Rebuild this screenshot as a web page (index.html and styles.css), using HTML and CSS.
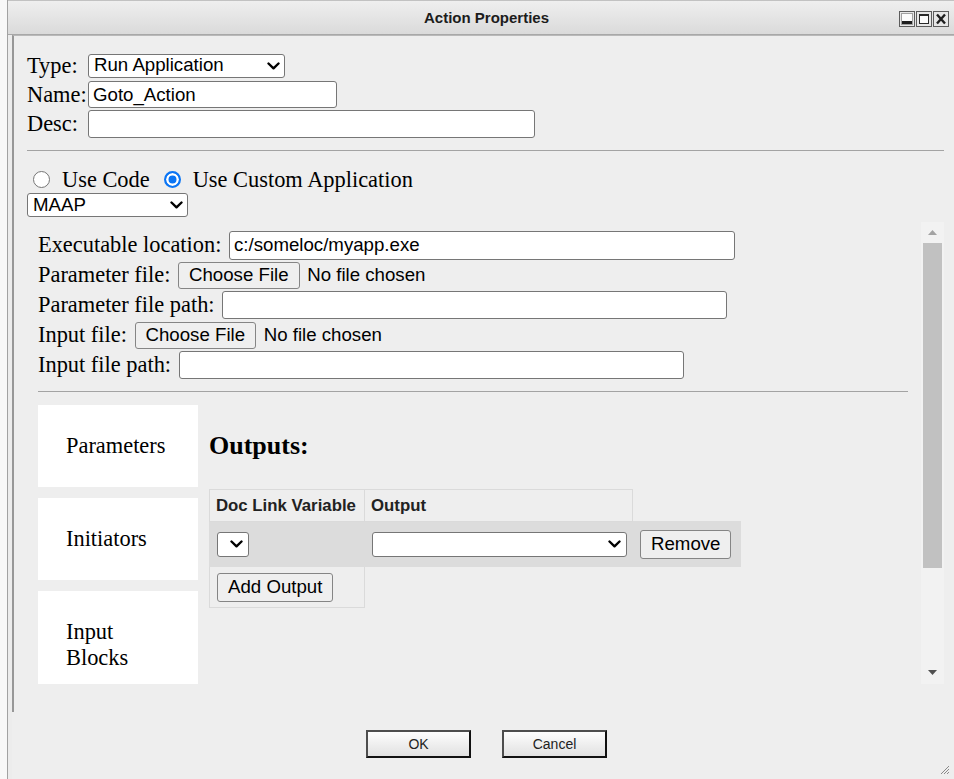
FILE: index.html
```html
<!DOCTYPE html>
<html lang="en">
<head>
<meta charset="utf-8">
<title>Action Properties</title>
<link rel="stylesheet" href="styles.css">
</head>
<body>
<div class="dialog">
  <header class="titlebar">
    <span class="title-spacer"></span>
    <h1 class="title">Action Properties</h1>
    <div class="win-buttons">
      <svg class="win-btn" width="16" height="16" viewBox="0 0 16 16" aria-label="Minimize">
        <rect x="0.5" y="0.5" width="15" height="15" fill="#e6e6e6" stroke="#5c5c5c"/>
        <rect x="2.5" y="2.5" width="11" height="11" fill="#fbfbfb" stroke="#a0a0a0"/>
        <rect x="3" y="10" width="10" height="3" fill="#1e1e1e"/>
      </svg>
      <svg class="win-btn" width="16" height="16" viewBox="0 0 16 16" aria-label="Maximize">
        <rect x="0.5" y="0.5" width="15" height="15" fill="#e6e6e6" stroke="#5c5c5c"/>
        <rect x="3.5" y="3.5" width="9" height="9" fill="#fbfbfb" stroke="#2a2a2a"/>
        <rect x="3" y="3" width="10" height="2" fill="#2a2a2a"/>
      </svg>
      <svg class="win-btn" width="16" height="16" viewBox="0 0 16 16" aria-label="Close">
        <rect x="0.5" y="0.5" width="15" height="15" fill="#e6e6e6" stroke="#5c5c5c"/>
        <path d="M4 3.5 L12 12.5 M12 3.5 L4 12.5" stroke="#1e1e1e" stroke-width="2.4" fill="none"/>
      </svg>
    </div>
  </header>

  <div class="dialog-body">
    <div class="panel">
      <div class="props">
        <span class="lbl">Type:</span>
        <span class="select select-type">
          <span class="select-value">Run Application</span>
          <svg class="chev" width="13" height="8" viewBox="0 0 13 8"><path d="M1.5 1.5 L6.5 6.3 L11.5 1.5"/></svg>
        </span>
        <span class="lbl">Name:</span>
        <input class="text name-input" type="text" value="Goto_Action">
        <span class="lbl">Desc:</span>
        <input class="text desc-input" type="text" value="">
      </div>

      <hr class="rule">

      <div class="mode">
        <label class="radio-opt first"><input type="radio" name="mode"> Use Code</label>
        <label class="radio-opt"><input type="radio" name="mode" checked> Use Custom Application</label>
      </div>

      <span class="select select-app">
        <span class="select-value">MAAP</span>
        <svg class="chev" width="13" height="8" viewBox="0 0 13 8"><path d="M1.5 1.5 L6.5 6.3 L11.5 1.5"/></svg>
      </span>

      <div class="scrollbox">
        <div class="scroll-content">
          <div class="field">
            <span class="lbl">Executable location:</span>
            <input class="text exe-input" type="text" value="c:/someloc/myapp.exe">
          </div>
          <div class="field">
            <span class="lbl">Parameter file:</span>
            <button class="btn" type="button">Choose File</button>
            <span class="file-name">No file chosen</span>
          </div>
          <div class="field">
            <span class="lbl">Parameter file path:</span>
            <input class="text path-input" type="text" value="">
          </div>
          <div class="field">
            <span class="lbl">Input file:</span>
            <button class="btn" type="button">Choose File</button>
            <span class="file-name">No file chosen</span>
          </div>
          <div class="field">
            <span class="lbl">Input file path:</span>
            <input class="text path-input" type="text" value="">
          </div>

          <hr class="rule rule-inner">

          <div class="editor">
            <nav class="tabs">
              <div class="tab">Parameters</div>
              <div class="tab">Initiators</div>
              <div class="tab">Input Blocks</div>
            </nav>
            <section class="pane">
              <h3 class="pane-title">Outputs:</h3>
              <table class="outputs">
                <colgroup>
                  <col class="col-var">
                  <col class="col-out">
                  <col class="col-act">
                </colgroup>
                <thead>
                  <tr>
                    <th>Doc Link Variable</th>
                    <th>Output</th>
                    <th class="blank"></th>
                  </tr>
                </thead>
                <tbody>
                  <tr class="out-row">
                    <td>
                      <span class="select select-var">
                        <svg class="chev" width="13" height="8" viewBox="0 0 13 8"><path d="M1.5 1.5 L6.5 6.3 L11.5 1.5"/></svg>
                      </span>
                    </td>
                    <td>
                      <span class="select select-out">
                        <span class="select-value"></span>
                        <svg class="chev" width="13" height="8" viewBox="0 0 13 8"><path d="M1.5 1.5 L6.5 6.3 L11.5 1.5"/></svg>
                      </span>
                    </td>
                    <td><button class="btn btn-row" type="button">Remove</button></td>
                  </tr>
                  <tr class="add-row">
                    <td><button class="btn btn-row" type="button">Add Output</button></td>
                  </tr>
                </tbody>
              </table>
            </section>
          </div>
        </div>

        <div class="scrollbar">
          <div class="sb-btn sb-up">
            <svg width="9" height="5" viewBox="0 0 9 5"><path d="M0 5 L4.5 0 L9 5 Z" fill="#a3a3a3"/></svg>
          </div>
          <div class="sb-thumb"></div>
          <div class="sb-track"></div>
          <div class="sb-btn sb-down">
            <svg width="9" height="5" viewBox="0 0 9 5"><path d="M0 0 L4.5 5 L9 0 Z" fill="#505050"/></svg>
          </div>
        </div>
      </div>
    </div>

    <footer class="actions">
      <button class="dlg-btn" type="button">OK</button>
      <button class="dlg-btn" type="button">Cancel</button>
      <svg class="grip" width="11" height="11" viewBox="0 0 11 11">
        <path d="M10 2 L2 10 M10 5 L5 10 M10 8 L8 10" stroke="#8a8a8a" stroke-width="1"/>
      </svg>
    </footer>
  </div>
</div>
</body>
</html>
```

FILE: styles.css
```css
* {
  box-sizing: border-box;
}

html,
body {
  margin: 0;
  height: 100%;
}

body {
  background: #f8f8f8;
  overflow: hidden;
  font-family: "Liberation Serif", "Times New Roman", serif;
  font-size: 22.4px;
  color: #000;
}

/* ---------- window frame ---------- */

.dialog {
  margin-left: 7px;
  width: 958px;
  height: 779px;
  border-left: 1px solid #a2a2a2;
  background: #ececec;
  display: flex;
  flex-direction: column;
}

.titlebar {
  flex: none;
  height: 35px;
  display: grid;
  grid-template-columns: 1fr auto 1fr;
  align-items: center;
  background: linear-gradient(#efefef, #dadada);
  border-top: 1px solid #c2c2c2;
  border-bottom: 1px solid #a8a8a8;
}

.title {
  margin: 0;
  font-family: "Liberation Sans", Arial, sans-serif;
  font-size: 15px;
  font-weight: bold;
  color: #1c1c1c;
}

.win-buttons {
  justify-self: end;
  display: flex;
  gap: 1px;
  padding-top: 2px;
  margin-right: 16px;
}

.win-btn {
  display: block;
}

.dialog-body {
  flex: 1;
  display: flex;
  flex-direction: column;
  padding: 0 4px;
}

.panel {
  border-left: 2px solid #979797;
  border-right: 2px solid #979797;
  border-top: 1px solid #b9b9b9;
  background: #eeeeee;
  padding: 15px 15px 28px 13px;
}

/* ---------- shared controls ---------- */

.lbl {
  white-space: nowrap;
}

.text {
  height: 28px;
  margin: 0;
  padding: 0 4px;
  border: 1px solid #767676;
  border-radius: 3px;
  background: #fff;
  color: #000;
  font-family: "Liberation Sans", Arial, sans-serif;
  font-size: 18.67px;
}

.select {
  display: flex;
  align-items: center;
  justify-content: space-between;
  height: 24px;
  padding: 0 4px 0 5px;
  border: 1px solid #767676;
  border-radius: 3px;
  background: #fff;
  font-family: "Liberation Sans", Arial, sans-serif;
  font-size: 18.67px;
  line-height: 1;
  white-space: nowrap;
}

.chev {
  flex: none;
  display: block;
}

.chev path {
  fill: none;
  stroke: #000;
  stroke-width: 2.4;
  stroke-linecap: round;
  stroke-linejoin: round;
}

.btn {
  height: 27px;
  margin: 0;
  padding: 0 10px;
  border: 1px solid #858585;
  border-radius: 3px;
  background: #efefef;
  color: #000;
  font-family: "Liberation Sans", Arial, sans-serif;
  font-size: 18.67px;
  white-space: nowrap;
}

.rule {
  height: 0;
  margin: 12px 0 0;
  border: 0;
  border-top: 1px solid #a3a3a3;
}

/* ---------- header form ---------- */

.props {
  display: grid;
  grid-template-columns: 61px auto;
  grid-auto-rows: 29px;
  align-items: center;
  justify-items: start;
}

.select-type {
  width: 197px;
}

.name-input {
  width: 249px;
  height: 27px;
}

.desc-input {
  width: 447px;
}

.mode {
  display: flex;
  align-items: center;
  height: 27px;
  margin-top: 15px;
  white-space: nowrap;
}

.radio-opt {
  display: flex;
  align-items: center;
  gap: 6px;
  margin-left: 14px;
}

.radio-opt.first {
  margin-left: 6px;
}

.radio-opt input {
  appearance: none;
  -webkit-appearance: none;
  width: 17px;
  height: 17px;
  margin: 0 6px 0 0;
  border: 1px solid #767676;
  border-radius: 50%;
  background: #fff;
}

.radio-opt input:checked {
  border: 2px solid #0b75f4;
  background: #0b75f4;
  box-shadow: inset 0 0 0 2.5px #fff;
}

.select-app {
  width: 161px;
}

/* ---------- scrolling editor area ---------- */

.scrollbox {
  display: flex;
  height: 462px;
  margin-top: 5px;
}

.scroll-content {
  flex: 1;
  min-width: 0;
  overflow: hidden;
  padding: 8px 13px 0 11px;
}

.field {
  display: flex;
  align-items: center;
  gap: 7.6px;
  height: 30px;
  white-space: nowrap;
}

.exe-input {
  width: 506px;
  height: 29px;
}

.path-input {
  width: 505px;
}

.file-name {
  font-family: "Liberation Sans", Arial, sans-serif;
  font-size: 18.67px;
}

.rule-inner {
  margin-top: 11px;
}

.editor {
  display: flex;
  align-items: flex-start;
  margin-top: 13px;
}

.tabs {
  flex: none;
  width: 160px;
  display: flex;
  flex-direction: column;
  gap: 11px;
}

.tab {
  background: #fff;
  padding: 28px;
  line-height: 26px;
}

.pane {
  margin-left: 11px;
}

.pane-title {
  margin: 26px 0 28px;
  font-size: 26px;
  font-weight: bold;
  line-height: 30px;
}

/* ---------- outputs table ---------- */

.outputs {
  border-collapse: collapse;
  table-layout: fixed;
  width: 531px;
  font-family: "Liberation Sans", Arial, sans-serif;
}

.col-var {
  width: 155px;
}

.col-out {
  width: 268px;
}

.col-act {
  width: 108px;
}

.outputs th {
  height: 32px;
  padding: 0 6px;
  text-align: left;
  font-size: 16.8px;
  font-weight: bold;
  color: #222;
  border: 1px solid #dadada;
  white-space: nowrap;
}

.outputs th.blank {
  border: none;
}

.out-row td {
  height: 45px;
  padding: 0 7px;
  background: #dcdcdc;
  border: 1px solid #dcdcdc;
}

.add-row td {
  height: 41px;
  padding: 0 7px;
  border: 1px solid #dadada;
}

.select-var {
  width: 32px;
  height: 25px;
  justify-content: flex-end;
  padding-right: 5px;
}

.select-out {
  width: 255px;
  height: 25px;
  padding-right: 5px;
}

.btn-row {
  height: 29px;
}

/* ---------- scrollbar ---------- */

.scrollbar {
  flex: none;
  width: 23px;
  display: flex;
  flex-direction: column;
  background: #f2f2f2;
}

.sb-btn {
  flex: none;
  display: flex;
  align-items: center;
  justify-content: center;
}

.sb-btn svg {
  display: block;
}

.sb-up {
  height: 21px;
}

.sb-down {
  height: 24px;
}

.sb-thumb {
  flex: none;
  height: 325px;
  margin: 0 2px;
  background: #c1c1c1;
}

.sb-track {
  flex: 1;
}

/* ---------- footer ---------- */

.actions {
  position: relative;
  flex: 1;
  display: flex;
  justify-content: center;
  align-items: flex-start;
  gap: 31px;
  padding-top: 18px;
  background: #eeeeee;
}

.dlg-btn {
  width: 105px;
  height: 28px;
  padding: 0;
  border: 2px solid;
  border-color: #4d4d4d #111 #111 #4d4d4d;
  background: linear-gradient(#fdfdfd, #e1e1e1);
  color: #222;
  font-family: "Liberation Sans", Arial, sans-serif;
  font-size: 14px;
}

.grip {
  position: absolute;
  right: 11px;
  bottom: 4px;
}
```
